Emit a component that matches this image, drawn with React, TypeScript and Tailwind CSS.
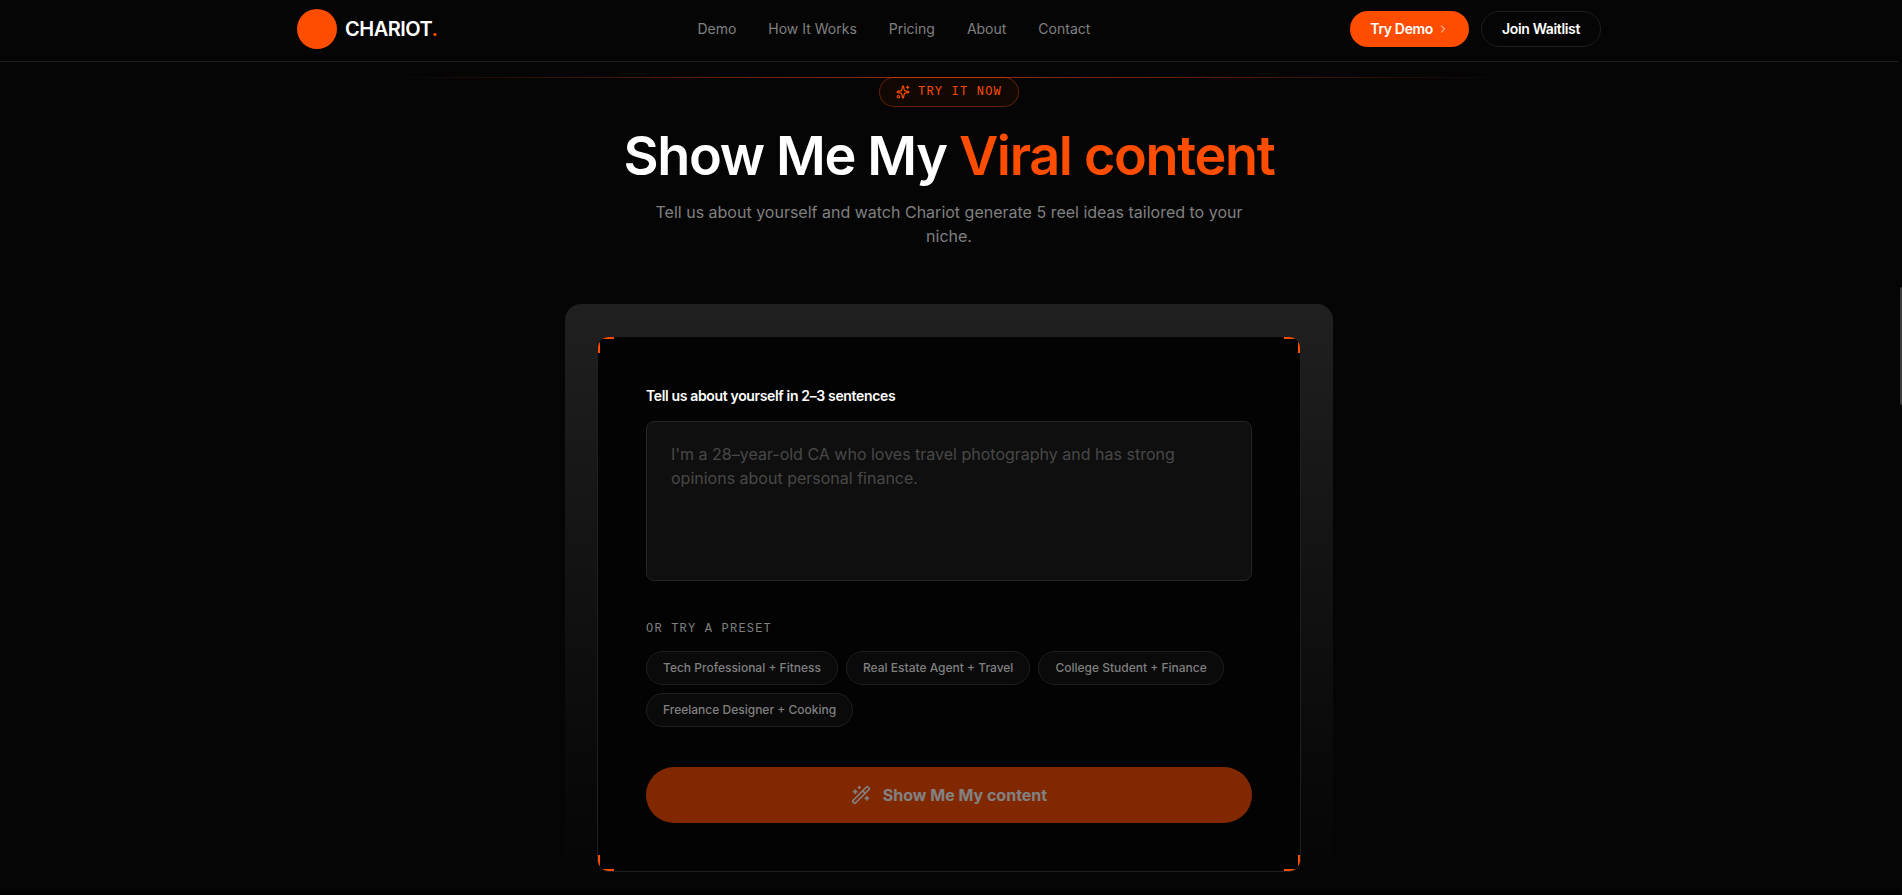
import { useState } from 'react';
import { ChevronRight, Sparkles, WandSparkles } from 'lucide-react';

const NAV_LINKS = ['Demo', 'How It Works', 'Pricing', 'About', 'Contact'];

const PRESETS = [
  'Tech Professional + Fitness',
  'Real Estate Agent + Travel',
  'College Student + Finance',
  'Freelance Designer + Cooking',
];

const CORNERS = [
  'top-0 left-0 border-t-2 border-l-2',
  'top-0 right-0 border-t-2 border-r-2',
  'bottom-0 left-0 border-b-2 border-l-2',
  'bottom-0 right-0 border-b-2 border-r-2',
];

const Header = () => (
  <header className="border-b border-[#1f1f1f] bg-[#050505]">
    <div className="mx-auto flex max-w-[1400px] items-center justify-between px-12 pt-[9px] pb-3">
      <a href="#" className="flex items-center gap-2">
        <span className="size-10 rounded-full bg-[#ff4d00]" />
        <span className="text-xl font-semibold tracking-tight text-white">
          CHARIOT<span className="text-[#ff4d00]">.</span>
        </span>
      </a>
      <nav className="flex items-center gap-8">
        {NAV_LINKS.map((link) => (
          <a key={link} href="#" className="text-sm text-[#808080] transition-colors hover:text-white">
            {link}
          </a>
        ))}
      </nav>
      <div className="flex items-center gap-3">
        <button className="flex h-9 items-center gap-1 rounded-full bg-[#ff4d00] px-5 text-sm font-semibold tracking-tight text-white">
          Try Demo
          <ChevronRight size={12} />
        </button>
        <button className="flex h-9 items-center rounded-full border border-[#1f1f1f] px-5 text-sm font-semibold tracking-tight text-white">
          Join Waitlist
        </button>
      </div>
    </div>
  </header>
);

const DemoForm = () => {
  const [bio, setBio] = useState('');

  return (
    <div className="mx-auto max-w-3xl rounded-2xl bg-linear-to-b from-[#202020] to-[#050505] p-8 pb-5">
      <form
        className="relative overflow-hidden rounded-xl border border-[#1f1f1f] bg-[#030303] p-12"
        onSubmit={(e) => e.preventDefault()}
      >
        {CORNERS.map((corner) => (
          <span key={corner} className={`absolute size-4 border-[#ff4d00] ${corner}`} />
        ))}

        <label htmlFor="bio" className="mb-3.5 block text-sm leading-[22px] font-semibold tracking-tight text-white">
          Tell us about yourself in 2–3 sentences
        </label>
        <textarea
          id="bio"
          value={bio}
          onChange={(e) => setBio(e.target.value)}
          placeholder="I'm a 28–year-old CA who loves travel photography and has strong opinions about personal finance."
          className="block h-40 w-full resize-none rounded-lg border border-[#262626] bg-[#0f0f0f] px-6 py-5 text-base leading-6 text-white outline-none placeholder:text-[#484848]"
        />

        <p className="mt-10 mb-3.5 font-['Liberation_Mono',monospace] text-xs leading-4 tracking-widest text-[#808080] uppercase">
          Or try a preset
        </p>
        <div className="flex flex-wrap gap-2">
          {PRESETS.map((preset) => (
            <button
              key={preset}
              type="button"
              onClick={() => setBio(preset)}
              className="rounded-full border border-[#1f1f1f] bg-[#0a0a0a] px-4 py-2 text-xs leading-4 font-medium text-[#808080] hover:text-white"
            >
              {preset}
            </button>
          ))}
        </div>

        <button
          type="submit"
          disabled={!bio}
          className="mt-10 flex h-14 w-full items-center justify-center gap-3 rounded-full bg-[#ff4d00] text-base font-bold text-white disabled:opacity-50"
        >
          <WandSparkles size={20} />
          Show Me My content
        </button>
      </form>
    </div>
  );
};

export default function App() {
  return (
    <div className="relative min-h-screen bg-[#020202] pr-1 font-[Inter,sans-serif]">
      <Header />
      <main className="bg-[#050505] pt-[15px]">
        <div className="mx-auto h-px w-3/5 bg-linear-to-r from-transparent via-[#ff4d00]/60 to-transparent" />
        <section className="-mt-px px-6 text-center">
          <span className="inline-flex items-center gap-2 rounded-full border border-[#ff4d00]/35 bg-[#ff4d00]/5 px-4 py-1.5 align-top font-['Liberation_Mono',monospace] text-xs leading-4 tracking-widest text-[#ff4d00] uppercase">
            <Sparkles size={14} />
            Try it now
          </span>
          <h1 className="mt-4 text-[54px] leading-[65px] font-semibold tracking-tight text-white">
            Show Me My <span className="text-[#ff4d00]">Viral content</span>
          </h1>
          <p className="mx-auto mt-3 max-w-[600px] text-base leading-6 text-[#808080]">
            Tell us about yourself and watch Chariot generate 5 reel ideas tailored to your niche.
          </p>
        </section>
        <div className="mt-14 px-6">
          <DemoForm />
        </div>
      </main>
      <div className="absolute top-0 right-0 h-full w-1 bg-[#050505]" />
      <div className="absolute top-[287px] right-0 h-[118px] w-0.5 rounded-l-full bg-[#3c3c3c]" />
    </div>
  );
}
